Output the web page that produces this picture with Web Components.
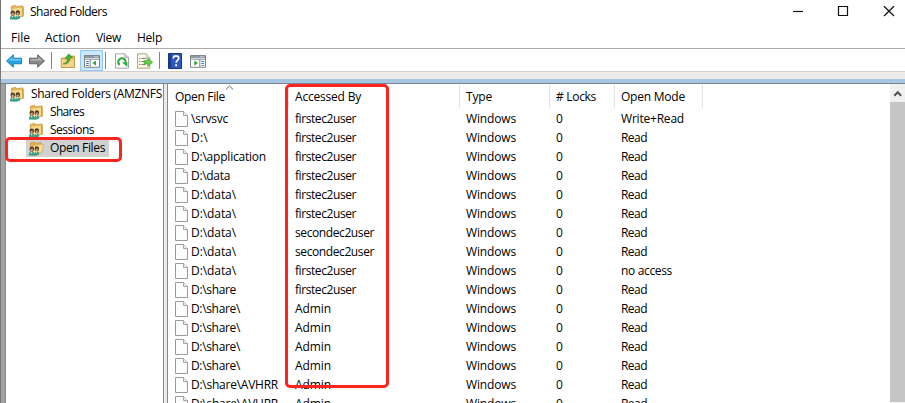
<!DOCTYPE html>
<html lang="en"><head><meta charset="utf-8"><title>Shared Folders</title>
<style>html,body{margin:0;height:100%;overflow:hidden;background:#fff}</style></head>
<body><shared-folders-window></shared-folders-window>
<script>
const define = (name, html, setup) => {
  customElements.define(name, class extends HTMLElement {
    connectedCallback() {
      if (this.shadowRoot) return;
      this.attachShadow({mode: 'open'}).innerHTML = html;
      if (setup) setup.call(this, this.shadowRoot);
    }
  });
};

// Single-line label whose tracking is adjusted to a given advance width.
define('fit-label', `<style>:host{display:block;white-space:pre}span{display:inline-block}</style><span><slot></slot></span>`, function (root) {
  const s = root.querySelector('span'), w = +this.getAttribute('w'), n = this.textContent.length;
  if (w) s.style.letterSpacing = ((w - s.getBoundingClientRect().width) / n) + 'px';
});

const people = `<g><path d="M1 15.6q-.3-4 2.6-4.4 2.4.1 3 2.4.6-2.3 2.4-2.6 2.4.4 2.4 3.2l-3.6 1.6z" fill="#3d9f86"/><path d="M2.6 11.5l1 2.2 1-2.2M7.6 11.3l1 1.9.9-1.9" fill="#eaf6f2"/><path d="M1.6 9.6q-.2-3 2.2-3t2.2 2.8l-.9 2H2.6z" fill="#54402f"/><path d="M6.7 9.2q-.1-2.9 2.1-2.9t2.2 2.7l-.9 2H7.6z" fill="#46352a"/><path d="M2.5 9.2l2-.6.4 1.6-1.1 1.3-1-.8zM7.5 8.9l2-.6.4 1.6-1.1 1.2-1-.7z" fill="#d9ab86"/></g>`;
const icons = {
  shared: `<path d="M2.3 2.3l4.2-1 1.2 1.2 6.3-.6v10.4l-10 2.2-1.7-1z" fill="#e3b557" stroke="#c99a45" stroke-width=".7"/><path d="M3.2 4.8l10.2-1.3v8.4L4 13.8z" fill="#f7d98c"/><path d="M13.3 2.4l1.4 1v8.8l-1.4.8z" fill="#cf9a3d"/>`+people,
  open: `<path d="M2.2 3l4.4-1 1.3 1.3 5.2-.6v10L3.5 14z" fill="#e0b050" stroke="#c99a45" stroke-width=".7"/><path d="M4.6 6l2.3-.3.8-.9 8-.5-2.1 8.6-9.2 1.6z" fill="#fadc91" stroke="#d2a04b" stroke-width=".6"/>`+people,
  back: `<path d="M.5 8L7.3 1.8v3.4h8.2v5.6H7.3v3.4z" fill="#24a4e5" stroke="#1778b5" stroke-width=".9"/><path d="M2.2 7.8l4.2-4V6h8.2v1.6z" fill="#68cbf5"/>`,
  forward: `<path d="M15.5 8L8.7 1.8v3.4H.5v5.6h8.2v3.4z" fill="#888" stroke="#5b5b5b" stroke-width=".9"/><path d="M13.8 7.8l-4.2-4V6H1.4v1.6z" fill="#b0b0b0"/>`,
  up: `<path d="M1.2 5.1h5l1-2h7.3v11.4H1.2z" fill="#e8bd66" stroke="#bd8d3b" stroke-width=".8"/><path d="M1.8 6.6h12.1v7.3H1.8z" fill="#f5d48b"/><path d="M3 10.9c3.5-.9 4.5-3.2 4.3-5.5H5.1l3.7-4.5 3.8 3.7H10c.2 4-2.1 7-7 6.3z" fill="#45b82d" stroke="#24881b" stroke-width=".6"/>`,
  tree: `<path d="M.5 2.5h15v11.8H.5z" fill="#fff" stroke="#7d8790"/><path d="M1 3h14v2H1z" fill="#8e9aa5"/><path d="M10.5 3.3h1v1h-1zM12.5 3.3h1v1h-1z" fill="#fff"/><path d="M1 6.2h14M6.2 6v8" stroke="#818b94"/><path d="M2 8.5h2.8M2 10.5h2.8M2 12.5h2.8" stroke="#54789d"/><path d="M12 7.5v5.2L8.5 10z" fill="#24a832"/>`,
  refresh: `<path d="M1.5.8h9.3l3.7 3.5v10.9h-13z" fill="#fff" stroke="#a6a6a6"/><path d="M10.8.8v3.5h3.7" fill="#ddd" stroke="#aaa"/><path d="M5.6 11.9A3.7 3.7 0 1 1 11.6 9.6" fill="none" stroke="#2da83c" stroke-width="2.1"/><path d="M7.8 9.3H13.4v4.6z" fill="#2da83c"/>`,
  export: `<path d="M.6.8h8.7l3.4 3.4v11H.6z" fill="#fffbe4" stroke="#aaa587"/><path d="M9.3.8v3.5h3.4" fill="#eee" stroke="#bbb"/><path d="M2.3 5.5h1M2.3 8.5h1M2.3 11.5h1" stroke="#555"/><path d="M4.5 5.5h5M4.5 8.5h4M4.5 11.5h4" stroke="#7c7c8d"/><path d="M7.2 7.6h3.5V5L15.7 9.3l-5 4.2v-2.6H7.2z" fill="#69ca47" stroke="#31a42f" stroke-width=".6"/>`,
  help: `<path d="M1.5.5h13v15h-13z" fill="#3158bd" stroke="#183783"/><path d="M2 1h2.3v14H2z" fill="#183d96"/><path d="M6.3 5.5q0-2.6 2.7-2.6t2.7 2.4c0 2.2-2.6 2.1-2.6 4.5" fill="none" stroke="#fff" stroke-width="1.6"/><path d="M8.2 11.3H10v1.9H8.2z" fill="#fff"/>`,
  pane: `<path d="M.5 2.5h15v11.8H.5z" fill="#fff" stroke="#7d8790"/><path d="M1 3h14v2H1z" fill="#8e9aa5"/><path d="M10.5 3.3h1v1h-1zM12.5 3.3h1v1h-1z" fill="#fff"/><path d="M1 6.2h14M9.8 6v8" stroke="#818b94"/><path d="M11.2 8.5H14M11.2 10.5H14M11.2 12.5H14" stroke="#438dbf"/><path d="M4.4 7.5v5.2L7.9 10z" fill="#24a832"/>`,
  file: `<path d="M1.5.5h8l4 4v11h-12z" fill="#fdfdfd" stroke="#9a9a9a"/><path d="M9.5.5v4h4" fill="#eee" stroke="#a5a5a5"/>`
};
define('ui-icon', `<style>:host{display:block;width:16px;height:16px;flex:none}svg{display:block;width:100%;height:100%}</style><svg viewBox="0 0 16 16"></svg>`, function (root) {
  root.querySelector('svg').innerHTML = icons[this.getAttribute('name')];
});

define('title-bar', `<style>:host{display:flex;height:25px;box-sizing:border-box;padding:0 0 1px 8px;align-items:center;flex:none}
ui-icon{margin-right:5px}.controls{margin-left:auto;display:flex;align-items:center;width:114px}.controls svg{width:114px;height:24px;display:block}</style>
<ui-icon name="shared"></ui-icon><fit-label w="77">Shared Folders</fit-label>
<div class="controls"><svg viewBox="791 0 114 24" fill="none" stroke="#111" stroke-width="1.2"><path d="M793 11.5h10"/><path d="M838.5 6.5h9v9h-9z"/><path d="M884 6.2l10 9.8M894 6.2L884 16"/></svg></div>`);

define('menu-bar', `<style>:host{display:flex;height:24px;box-sizing:border-box;padding:2px 0 0 10px;align-items:center;border-bottom:1px solid #ababab;flex:none}fit-label{flex:none}</style>
<fit-label w="19" style="width:34px">File</fit-label><fit-label w="35" style="width:51px">Action</fit-label><fit-label w="25" style="width:41px">View</fit-label><fit-label w="25">Help</fit-label>`);

define('tool-bar', `<style>:host{display:flex;height:23px;box-sizing:border-box;border-bottom:1px solid #d0d0d0;padding:1px 0 0 5px;align-items:center;flex:none}
i{width:1px;height:17px;background:#858585;flex:none}.on{width:21px;height:19px;border:1px solid #90c8f6;background:#cce8ff;display:grid;place-items:center}</style>
<ui-icon name="back"></ui-icon><ui-icon name="forward" style="margin-left:7px"></ui-icon><i style="margin:0 8px 0 6px"></i><ui-icon name="up"></ui-icon><div class="on" style="margin-left:4px"><ui-icon name="tree"></ui-icon></div><i style="margin:0 8px 0 2px"></i><ui-icon name="refresh"></ui-icon><ui-icon name="export" style="margin-left:7px"></ui-icon><i style="margin:0 7px 0 6px"></i><ui-icon name="help"></ui-icon><ui-icon name="pane" style="margin-left:7px"></ui-icon>`);

define('tree-item', `<style>:host{display:flex;height:18px;align-items:center;padding-left:20px}:host([root]){padding-left:0}
div{display:flex;height:17px;align-items:center;gap:6px;padding:0 4px 0 2px}:host([root]) div{padding-left:3px}:host([selected]) div{background:#d1d1d1}</style><div><ui-icon></ui-icon><slot></slot></div>`, function (root) {
  root.querySelector('ui-icon').replaceWith(Object.assign(document.createElement('template'), {innerHTML: `<ui-icon name="${this.getAttribute('icon') || 'shared'}"></ui-icon>`}).content);
});
define('folder-tree', `<style>:host{display:block;box-sizing:border-box;width:159px;padding-top:1px;border:solid #828790;border-width:0 1px;overflow:hidden;background:#fff;flex:none}</style>
<tree-item root><fit-label w="131">Shared Folders (AMZNFS</fit-label></tree-item>
<tree-item><fit-label w="34">Shares</fit-label></tree-item>
<tree-item><fit-label w="44">Sessions</fit-label></tree-item>
<tree-item selected icon="open"><fit-label w="55">Open Files</fit-label></tree-item>`);

define('file-row', `<style>:host{display:grid;grid-template-columns:121px 171px 90px 65px auto;height:19px;align-items:center;padding-left:6px}.file{display:flex;align-items:center;gap:1px}fit-label{padding-top:1px}</style>`, function (root) {
  const [name, nw, user, uw, mode, mw] = this.data;
  root.innerHTML += `<div class="file"><ui-icon name="file"></ui-icon><fit-label w="${nw}">${name}</fit-label></div><fit-label w="${uw}">${user}</fit-label><fit-label w="50">Windows</fit-label><fit-label w="7">0</fit-label><fit-label w="${mw}">${mode}</fit-label>`;
});
define('list-header', `<style>:host{display:grid;grid-template-columns:121px 171px 90px 65px 88px;height:23px;align-items:center;margin:1px 0 1px}
div{position:relative;height:23px;display:flex;align-items:center;padding:1px 0 0 6px;box-sizing:border-box;border-right:1px solid #e2e2e2}div:first-of-type{padding-left:7px}svg{position:absolute;left:57px;top:0}</style>
<div><fit-label w="50">Open File</fit-label><svg width="9" height="5"><path d="M1 4.4L4.5 1 8 4.4" fill="none" stroke="#666"/></svg></div><div><fit-label w="66">Accessed By</fit-label></div><div><fit-label w="26">Type</fit-label></div><div><fit-label w="40">#&nbsp;Locks</fit-label></div><div><fit-label w="64">Open Mode</fit-label></div>`);
define('file-list', `<style>:host{display:block;flex:1;min-width:0;overflow:hidden;border-left:1px solid #828790;background:#fff}</style><list-header></list-header>`, function (root) {
  const f=['firstec2user',61], s=['secondec2user',79], a=['Admin',36], r=['Read',26];
  [['\\srvsvc',37,...f,'Write+Read',63],['D:\\',17,...f,...r],['D:\\application',75,...f,...r],['D:\\data',39,...f,...r],['D:\\data\\',45,...f,...r],['D:\\data\\',45,...f,...r],['D:\\data\\',45,...s,...r],['D:\\data\\',45,...s,...r],['D:\\data\\',45,...f,'no access',51],['D:\\share',45,...f,...r],
   ...Array.from({length:4},()=>['D:\\share\\',49,...a,...r]),...Array.from({length:2},()=>['D:\\share\\AVHRR',87,...a,...r])].forEach(d => {
    const row = document.createElement('file-row'); row.data = d; root.append(row);
  });
});
define('scroll-bar', `<style>:host{display:flex;flex-direction:column;width:15px;background:#f0f0f0;flex:none}svg{display:block;height:18px;flex:none}div{height:300px;background:#c5c5c5}</style><svg width="15" height="18"><path d="M4.3 11.8L7.7 8.3l3.4 3.5" fill="none" stroke="#505050" stroke-width="2"/></svg><div></div>`);
define('call-out', `<style>:host{display:block;position:absolute;box-sizing:border-box;border:3px solid #fb241f;border-radius:5px}</style>`);
define('shared-folders-window', `<style>:host{display:flex;flex-direction:column;position:relative;width:905px;height:403px;box-sizing:border-box;overflow:hidden;border-left:1px solid #777;background:#fff;color:#000;font:12px/16px "Open Sans","Noto Sans",sans-serif}
.band{height:7px;background:#ececec;flex:none}.blue{height:4px;background:#a7c6e2;border-bottom:1px solid #758392;flex:none}main{display:flex;flex:1;min-height:0}.edge{width:4px;background:#a2a2a2;flex:none}.split{width:3px;background:#ececf0;flex:none}</style>
<title-bar></title-bar><menu-bar></menu-bar><tool-bar></tool-bar><div class="band"></div><div class="blue"></div>
<main><div class="edge"></div><folder-tree></folder-tree><div class="split"></div><file-list></file-list><scroll-bar></scroll-bar></main>
<call-out style="left:4px;top:137px;width:117px;height:25px"></call-out><call-out style="left:284px;top:84px;width:104px;height:304px"></call-out>`);
</script></body></html>
